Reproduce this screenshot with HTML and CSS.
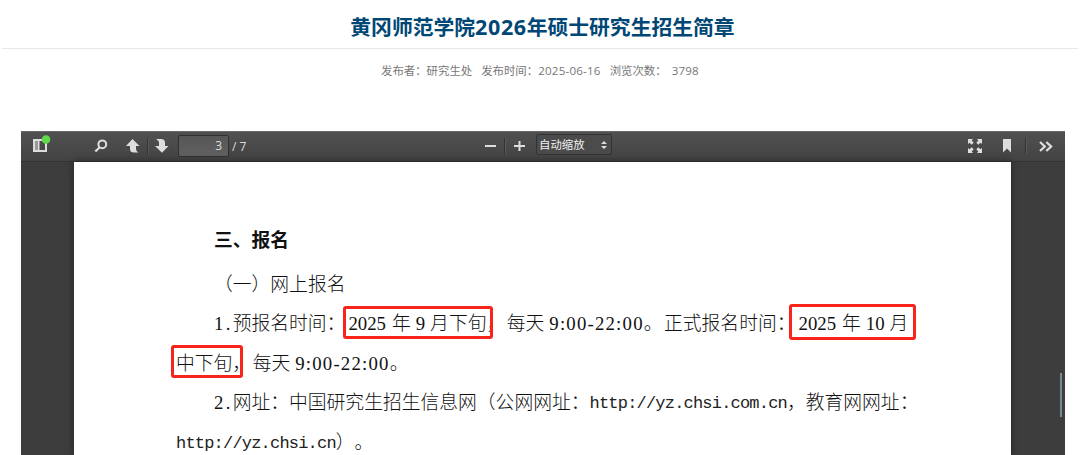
FILE: index.html
```html
<!DOCTYPE html>
<html lang="zh-CN">
<head>
  <meta charset="UTF-8">
  <title>黄冈师范学院2026年硕士研究生招生简章</title>
  <link rel="stylesheet" href="styles.css">
</head>
<body>

  <h1 class="title">黄冈师范学院<span class="year">2026</span>年硕士研究生招生简章</h1>

  <div class="meta">
    <span>发布者：研究生处</span>
    <span>发布时间：<span class="num">2025-06-16</span></span>
    <span class="views">浏览次数：<span class="num">3798</span></span>
  </div>

  <div class="viewer">
    <div class="toolbar">
      <div class="group left">
        <svg class="icon sidebar" width="20" height="20" viewBox="0 0 20 20">
          <path fill="#ddd" fill-rule="evenodd" d="M1 4h14v13H1zM3 6v9h3V6zM7.500 6v9H13V6z"/>
          <path fill="#999" d="M3 6h3v9H3z"/>
          <circle cx="14" cy="4.500" r="4.300" fill="#5fd84c"/>
        </svg>
        <svg class="icon search" width="14" height="14" viewBox="0 0 14 14" fill="none" stroke="#ddd">
          <circle cx="8.300" cy="5.300" r="3.900" stroke-width="2"/>
          <path stroke-width="2.400" d="M5.500 8.500L1.300 12.500"/>
        </svg>
        <svg class="icon up" width="14" height="14" viewBox="0 0 14 14" fill="#ddd">
          <path d="M6.500 0L13.500 7H10v3q0 2 2.500 3.500H8Q4 13.500 4 10V7H0z"/>
        </svg>
        <i class="split"></i>
        <svg class="icon down" width="14" height="14" viewBox="0 0 14 14" fill="#ddd">
          <path d="M1 0H6q4 0 4 3.500V7h3.500L7 13.800 0 7h4V3.500Q4 1.500 1 0z"/>
        </svg>
        <div class="page-number">3</div>
        <span class="pages">/ 7</span>
      </div>
      <div class="group center">
        <svg class="icon" width="11" height="12" viewBox="0 0 11 12"><path fill="#ddd" d="M0 5h11v2H0z"/></svg>
        <i class="split"></i>
        <svg class="icon" width="11" height="12" viewBox="0 0 11 12"><path fill="#ddd" d="M0 5h4.500V1h2v4H11v2H6.500v4h-2V7H0z"/></svg>
        <div class="scale">自动缩放
          <svg width="6" height="8" viewBox="0 0 6 8" fill="#ddd"><path d="M0 3l3-3 3 3zM0 5h6l-3 3z"/></svg>
        </div>
      </div>
      <div class="group right">
        <svg class="icon" width="14" height="14" viewBox="0 0 14 14" fill="#ddd">
          <path d="M0 0h5L3.700 1.500 5.700 3.700 3.700 5.700 1.500 3.700 0 5zM14 0v5l-1.500-1.300L10.300 5.700 8.300 3.700l2-2.200L9 0zM0 14V9l1.500 1.300L3.700 8.300l2 2L3.700 12.500 5 14zM14 14H9l1.300-1.500L8.300 10.300l2-2 2.200 2L14 9z"/>
        </svg>
        <svg class="icon bookmark" width="8" height="14" viewBox="0 0 8 14"><path fill="#ddd" d="M0 0h8v13.500L4 9.500l-4 4z"/></svg>
        <i class="split"></i>
        <svg class="icon more" width="14" height="11" viewBox="0 0 14 11" fill="none" stroke="#ddd" stroke-width="2.300">
          <path d="M1 1l4.800 4.500L1 10M7.300 1l4.800 4.500L7.300 10"/>
        </svg>
      </div>
    </div>

    <div class="canvas">
      <div class="page">
        <h2>三、报名</h2>
        <p class="indent">（一）网上报名</p>
        <p class="indent"><span class="en dot">1.</span>预报名时间：<span class="en date">2025</span><span class="gap">年</span><span class="en">9</span><span class="gap month">月</span>下旬，<span class="after">每</span>天<span class="en time">9:00-22:00</span>。<span class="after">正</span>式报名时间：<span class="en date">2025</span><span class="gap">年</span><span class="en">10</span><span class="gap month">月</span></p>
        <p>中下旬，<span class="after">每</span>天<span class="en time">9:00-22:00</span>。</p>
        <p class="indent"><span class="en dot">2.</span>网址：中国研究生招生信息网（公网网址：<span class="url">http://yz.chsi.com.cn</span>，教育网网址：</p>
        <p><span class="url">http://yz.chsi.cn</span>）。</p>
        <div class="mark mark-early"></div>
        <div class="mark mark-formal"></div>
        <div class="mark mark-rest"></div>
      </div>
      <div class="scroll-thumb"></div>
    </div>
  </div>

</body>
</html>
```
FILE: styles.css
```css
* {
  box-sizing: border-box;
}

body {
  margin: 0;
  height: 455px;
  overflow: hidden;
  background: #fff;
  font-family: "Open Sans", "Noto Sans CJK SC", sans-serif;
}

.title {
  margin: 0 2px;
  height: 49px;
  padding: 5px 0 0 5px;
  border-bottom: 1px solid #e8e8e8;
  color: #004775;
  font-size: 20.8px;
  line-height: 43px;
  text-align: center;
  font-family: "Noto Sans CJK SC", sans-serif;
}

.year {
  font-family: "Open Sans", sans-serif;
  font-size: 21.5px;
  letter-spacing: 0.6px;
}

.meta {
  display: flex;
  justify-content: center;
  gap: 9px;
  height: 82px;
  padding-top: 11px;
  color: #777;
  font-family: "Noto Sans CJK SC", sans-serif;
  font-size: 11.4px;
  line-height: 20px;
}

.num {
  font-family: "Open Sans", sans-serif;
  font-size: 11.6px;
  letter-spacing: 0.2px;
}

.views .num {
  margin-left: 5px;
}

.viewer {
  width: 1044px;
  margin-left: 21px;
}

.toolbar {
  display: grid;
  grid-template-columns: 458px 1fr auto;
  height: 31px;
  border-top: 1px solid #686868;
  border-bottom: 1px solid #333;
  background: linear-gradient(#505050, #434343);
  color: #ddd;
}

.group {
  display: flex;
  align-items: center;
  height: 28px;
}

.icon {
  flex: none;
}

.split {
  width: 2px;
  height: 16px;
  background: #333;
  border-right: 1px solid #5b5b5b;
}

.left {
  padding-left: 11px;
}

.sidebar {
  margin-top: -3px;
}

.search {
  margin-left: 42px;
}

.up {
  margin-left: 18px;
}

.left .split {
  margin: 0 6px 0 7px;
}

.page-number {
  width: 51px;
  height: 22px;
  margin-left: 9px;
  padding-right: 6px;
  border: 1px solid #303030;
  border-radius: 2px;
  background: linear-gradient(#565656, #616161);
  text-align: right;
  font-size: 12px;
  line-height: 20px;
}

.pages {
  margin-left: 3px;
  font-size: 12px;
}

.center {
  padding-left: 6px;
}

.center .split {
  margin: 0 8px;
}

.scale {
  display: flex;
  align-items: center;
  justify-content: space-between;
  width: 76px;
  height: 21px;
  margin: -3px 0 0 11px;
  padding: 0 4px 0 2px;
  border: 1px solid #333;
  border-radius: 2px;
  background: #4b4b4b;
  font-size: 11.4px;
  line-height: 19px;
  color: #f0f0f0;
}

.right {
  padding-right: 12px;
}

.bookmark {
  margin-left: 21px;
}

.right .split {
  margin: 0 12px 0 14px;
}

.canvas {
  position: relative;
  height: 293px;
  padding: 0 54px 0 53px;
  background: #3d3d3d;
}

.page {
  position: relative;
  height: 293px;
  padding: 57px 0 0 102px;
  background: #fff;
  box-shadow: 0 0 7px #222;
  color: #111;
  font-family: "Noto Sans CJK SC", sans-serif;
  font-size: 18.8px;
  font-weight: 300;
  text-spacing-trim: space-all;
  white-space: nowrap;
}

.page h2 {
  margin: 0;
  padding-left: 38px;
  height: 44px;
  font-size: 18.8px;
  line-height: 40px;
}

.page p {
  margin: 0;
  height: 39.4px;
  line-height: 40px;
}

.page .indent {
  padding-left: 38px;
}

.en {
  font-family: "Liberation Serif", serif;
  font-size: 18.8px;
  font-weight: 400;
}

.dot {
  letter-spacing: 2.3px;
}

.url {
  position: relative;
  top: -1px;
  color: #222;
  font-family: "Liberation Mono", monospace;
  font-size: 17px;
  letter-spacing: -0.8px;
}

.date {
  margin-left: 3px;
}

.gap {
  margin: 0 5px 0 6px;
}

.month {
  margin: 0 0 0 5px;
}

.after {
  margin-left: 1.5px;
}

.time {
  margin-left: 5px;
  letter-spacing: 1.2px;
}

/* red frames drawn over the dates */
.mark {
  position: absolute;
  height: 33px;
  border: 3px solid #f8241b;
  border-radius: 3px;
}

.mark-early {
  left: 269px;
  top: 144px;
  width: 150px;
}

.mark-formal {
  left: 715px;
  top: 142px;
  width: 127px;
  height: 36px;
}

.mark-rest {
  left: 97px;
  top: 183px;
  width: 72px;
}

.scroll-thumb {
  position: absolute;
  right: 3px;
  top: 211px;
  width: 2px;
  height: 44px;
  background: #748995;
}
```
